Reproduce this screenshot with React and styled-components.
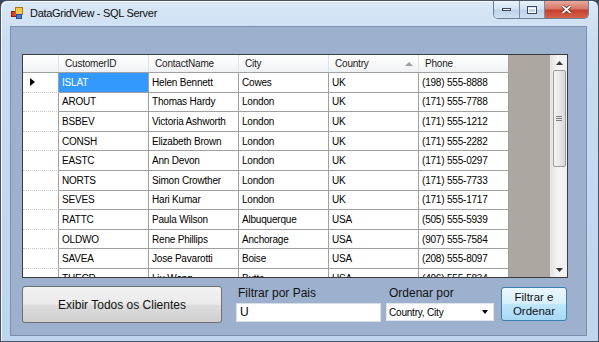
import React from "react";
import styled, { createGlobalStyle } from "styled-components";

const GlobalStyle = createGlobalStyle`
  html, body {
    margin: 0;
    padding: 0;
    background: #3b4656;
  }
  body {
    font-family: "Liberation Sans", Arial, sans-serif;
  }
`;

const columns = ["CustomerID", "ContactName", "City", "Country", "Phone"];

const customers = [
  ["ISLAT", "Helen Bennett", "Cowes", "UK", "(198) 555-8888"],
  ["AROUT", "Thomas Hardy", "London", "UK", "(171) 555-7788"],
  ["BSBEV", "Victoria Ashworth", "London", "UK", "(171) 555-1212"],
  ["CONSH", "Elizabeth Brown", "London", "UK", "(171) 555-2282"],
  ["EASTC", "Ann Devon", "London", "UK", "(171) 555-0297"],
  ["NORTS", "Simon Crowther", "London", "UK", "(171) 555-7733"],
  ["SEVES", "Hari Kumar", "London", "UK", "(171) 555-1717"],
  ["RATTC", "Paula Wilson", "Albuquerque", "USA", "(505) 555-5939"],
  ["OLDWO", "Rene Phillips", "Anchorage", "USA", "(907) 555-7584"],
  ["SAVEA", "Jose Pavarotti", "Boise", "USA", "(208) 555-8097"],
  ["THECR", "Liu Wong", "Butte", "USA", "(406) 555-5834"],
];

const Window = styled.div`
  width: 599px;
  height: 342px;
  box-sizing: border-box;
  border: 1px solid #4a5668;
  border-radius: 7px 7px 0 0;
  background: linear-gradient(180deg, #dae8f7 0%, #c9dcf1 12%, #bfd5ee 100%);
  box-shadow: inset 1px 1px 0 rgba(255, 255, 255, 0.8);
  padding: 0 11px 5px 9px;
  display: flex;
  flex-direction: column;
`;

const TitleBar = styled.div`
  height: 25px;
  display: flex;
  align-items: flex-start;
`;

const AppIcon = styled.svg`
  margin: 6px 0 0 1px;
  flex-shrink: 0;
`;

const Title = styled.span`
  margin: 5px 0 0 7px;
  font-size: 11px;
  letter-spacing: -0.3px;
  line-height: 14px;
  color: #0b0b0b;
`;

const Caption = styled.div`
  margin-left: auto;
  margin-right: -2px;
  display: flex;
  border: 1px solid #6f7f96;
  border-top: none;
  border-radius: 0 0 5px 5px;
  overflow: hidden;
  height: 17px;
`;

const CaptionButton = styled.div`
  width: ${(p) => p.$w}px;
  height: 17px;
  display: flex;
  align-items: center;
  justify-content: center;
  border-left: ${(p) => (p.$first ? "none" : "1px solid #7b8ba2")};
  background: ${(p) =>
    p.$close
      ? "linear-gradient(180deg, #e9a99c 0%, #d7786a 45%, #c3402f 55%, #d9624c 100%)"
      : "linear-gradient(180deg, #eaf2fb 0%, #d4e3f4 45%, #bed2ea 55%, #cfe0f3 100%)"};
`;

const Client = styled.div`
  flex: 1;
  box-sizing: border-box;
  background: #9db1cf;
  border: 1px solid #7b90af;
  padding: 27px 0 0 11px;
`;

const Grid = styled.div`
  width: 546px;
  height: 224px;
  box-sizing: border-box;
  border: 1px solid #3c3c3c;
  display: flex;
  font-size: 10px;
  letter-spacing: -0.2px;
  color: #000;
`;

const DataPane = styled.div`
  flex: 1;
  overflow: hidden;
  background: #aca7a0;
`;

const HeaderRow = styled.div`
  display: flex;
  width: 486px;
  height: 18px;
  box-sizing: border-box;
  border-bottom: 1px solid #a0a0a0;
  background: linear-gradient(180deg, #ffffff 0%, #f7f8f9 60%, #eef0f2 100%);
`;

const HeaderCell = styled.div`
  position: relative;
  width: ${(p) => p.$w}px;
  box-sizing: border-box;
  padding-left: 6px;
  line-height: 17px;
  color: #1a1a1a;
  border-right: 1px solid ${(p) => (p.$last ? "#a0a0a0" : "#dfe2e6")};
`;

const SortGlyph = styled.span`
  position: absolute;
  right: 5px;
  top: 7px;
  border-left: 4px solid transparent;
  border-right: 4px solid transparent;
  border-bottom: 4px solid #9a9da3;
`;

const Row = styled.div`
  display: flex;
  width: 486px;
  height: 19.6px;
  background: #fff;
`;

const RowHeader = styled.div`
  width: 36px;
  box-sizing: border-box;
  border-right: 1px solid #a0a0a0;
  border-bottom: 1px dotted #c9c9c9;
  display: flex;
  align-items: center;
  padding-left: 7px;
`;

const CurrentArrow = styled.span`
  border-top: 4px solid transparent;
  border-bottom: 4px solid transparent;
  border-left: 5px solid #000;
`;

const Cell = styled.div`
  width: 90px;
  box-sizing: border-box;
  border-right: 1px solid #a0a0a0;
  border-bottom: 1px solid #a0a0a0;
  padding-left: 3px;
  display: flex;
  align-items: center;
  white-space: nowrap;
  overflow: hidden;
  background: ${(p) => (p.$selected ? "#3399ff" : "#fff")};
  color: ${(p) => (p.$selected ? "#fff" : "#000")};
`;

const ScrollBar = styled.div`
  width: 16px;
  display: flex;
  flex-direction: column;
  align-items: center;
  background: linear-gradient(90deg, #e4e4e4 0%, #f4f4f4 40%, #f0f0f0 100%);
  border-left: 1px solid #e8e8e8;
`;

const ArrowButton = styled.div`
  height: 15px;
  width: 100%;
  display: flex;
  align-items: center;
  justify-content: center;
`;

const Thumb = styled.div`
  width: 13px;
  height: 97px;
  box-sizing: border-box;
  border: 1px solid #9b9b9b;
  border-radius: 2px;
  background: linear-gradient(90deg, #f3f3f3 0%, #e8e8e8 50%, #d8d8d8 100%);
  display: flex;
  flex-direction: column;
  align-items: center;
  justify-content: center;
  gap: 1px;
`;

const Grip = styled.span`
  width: 6px;
  height: 1px;
  background: #7d7d7d;
`;

const Track = styled.div`
  flex: 1;
`;

const BottomBar = styled.div`
  margin-top: 8px;
  display: flex;
  align-items: flex-start;
`;

const BigButton = styled.button`
  width: 200px;
  height: 37px;
  border: 1px solid #707070;
  border-radius: 3px;
  background: linear-gradient(180deg, #f2f2f2 0%, #ebebeb 48%, #dddddd 52%, #cfcfcf 100%);
  font-family: "Liberation Sans", Arial, sans-serif;
  font-size: 12px;
  color: #111;
  padding: 0;
`;

const Field = styled.div`
  margin-left: ${(p) => p.$ml}px;
  display: flex;
  flex-direction: column;
`;

const Label = styled.label`
  height: 17px;
  margin-left: ${(p) => p.$ml}px;
  font-size: 12px;
  line-height: 15px;
  color: #111;
`;

const TextBox = styled.div`
  width: 145px;
  height: 19px;
  box-sizing: border-box;
  border: 1px solid #d9dee6;
  background: #fff;
  font-size: 12px;
  line-height: 17px;
  padding-left: 3px;
  color: #000;
`;

const Combo = styled.div`
  width: 108px;
  height: 18px;
  box-sizing: border-box;
  border: 1px solid #dfe3ea;
  background: #fff;
  display: flex;
  align-items: center;
  justify-content: space-between;
  padding: 0 5px 0 2px;
  font-size: 10px;
  letter-spacing: -0.2px;
  color: #000;
`;

const DropArrow = styled.span`
  border-left: 3.5px solid transparent;
  border-right: 3.5px solid transparent;
  border-top: 4px solid #000;
`;

const SmallButton = styled.button`
  margin: 1px 0 0 7px;
  width: 66px;
  height: 34px;
  border: 1px solid #3c7fb1;
  border-radius: 3px;
  background: linear-gradient(180deg, #eaf6fd 0%, #d9f0fc 48%, #bee6fd 52%, #a7d9f5 100%);
  font-family: "Liberation Sans", Arial, sans-serif;
  font-size: 11.5px;
  line-height: 14px;
  color: #111;
  padding: 0;
`;

const ScrollArrow = ({ up }) => (
  <svg width="7" height="4" viewBox="0 0 7 4">
    <path d={up ? "M0 4 L3.5 0 L7 4 Z" : "M0 0 L7 0 L3.5 4 Z"} fill="#3a3a3a" />
  </svg>
);

const App = () => {
  const widths = [36, 90, 90, 90, 90, 90];

  return (
    <>
      <GlobalStyle />
      <Window>
        <TitleBar>
          <AppIcon width="12" height="12" viewBox="0 0 12 12">
            <rect x="0.5" y="4.5" width="5" height="5" fill="#e23b2a" stroke="#8a1c12" />
            <rect x="4.5" y="0.5" width="7" height="7" fill="#f6c94a" stroke="#a87a12" />
            <rect x="5.5" y="7.5" width="5" height="4" fill="#4a7fd0" stroke="#214f92" />
          </AppIcon>
          <Title>DataGridView - SQL Server</Title>
          <Caption>
            <CaptionButton $w={25} $first>
              <svg width="9" height="3">
                <rect x="0.5" y="0.5" width="8" height="2" fill="#fff" stroke="#3d4c61" />
              </svg>
            </CaptionButton>
            <CaptionButton $w={24}>
              <svg width="10" height="8">
                <rect x="0.5" y="0.5" width="9" height="7" fill="none" stroke="#3d4c61" />
                <rect x="1.5" y="2.5" width="7" height="4" fill="none" stroke="#fff" />
              </svg>
            </CaptionButton>
            <CaptionButton $w={43} $close>
              <svg width="11" height="9" viewBox="0 0 11 9">
                <path d="M1.5 1 L9.5 8 M9.5 1 L1.5 8" stroke="#5a1a12" strokeWidth="3.2" />
                <path d="M1.5 1 L9.5 8 M9.5 1 L1.5 8" stroke="#fff" strokeWidth="1.8" />
              </svg>
            </CaptionButton>
          </Caption>
        </TitleBar>

        <Client>
          <Grid>
            <DataPane>
              <HeaderRow>
                <HeaderCell $w={widths[0]} />
                {columns.map((c, i) => (
                  <HeaderCell key={c} $w={90} $last={i === columns.length - 1}>
                    {c}
                    {c === "Country" && <SortGlyph />}
                  </HeaderCell>
                ))}
              </HeaderRow>
              {customers.map((row, r) => (
                <Row key={row[0]}>
                  <RowHeader>{r === 0 && <CurrentArrow />}</RowHeader>
                  {row.map((v, i) => (
                    <Cell key={i} $selected={r === 0 && i === 0}>
                      {v}
                    </Cell>
                  ))}
                </Row>
              ))}
            </DataPane>
            <ScrollBar>
              <ArrowButton>
                <ScrollArrow up />
              </ArrowButton>
              <Thumb>
                <Grip />
                <Grip />
                <Grip />
              </Thumb>
              <Track />
              <ArrowButton>
                <ScrollArrow />
              </ArrowButton>
            </ScrollBar>
          </Grid>

          <BottomBar>
            <BigButton>Exibir Todos os Clientes</BigButton>
            <Field $ml={14}>
              <Label $ml={2}>Filtrar por Pais</Label>
              <TextBox>U</TextBox>
            </Field>
            <Field $ml={5}>
              <Label $ml={3}>Ordenar por</Label>
              <Combo>
                Country, City
                <DropArrow />
              </Combo>
            </Field>
            <SmallButton>
              Filtrar e
              <br />
              Ordenar
            </SmallButton>
          </BottomBar>
        </Client>
      </Window>
    </>
  );
};

export default App;
